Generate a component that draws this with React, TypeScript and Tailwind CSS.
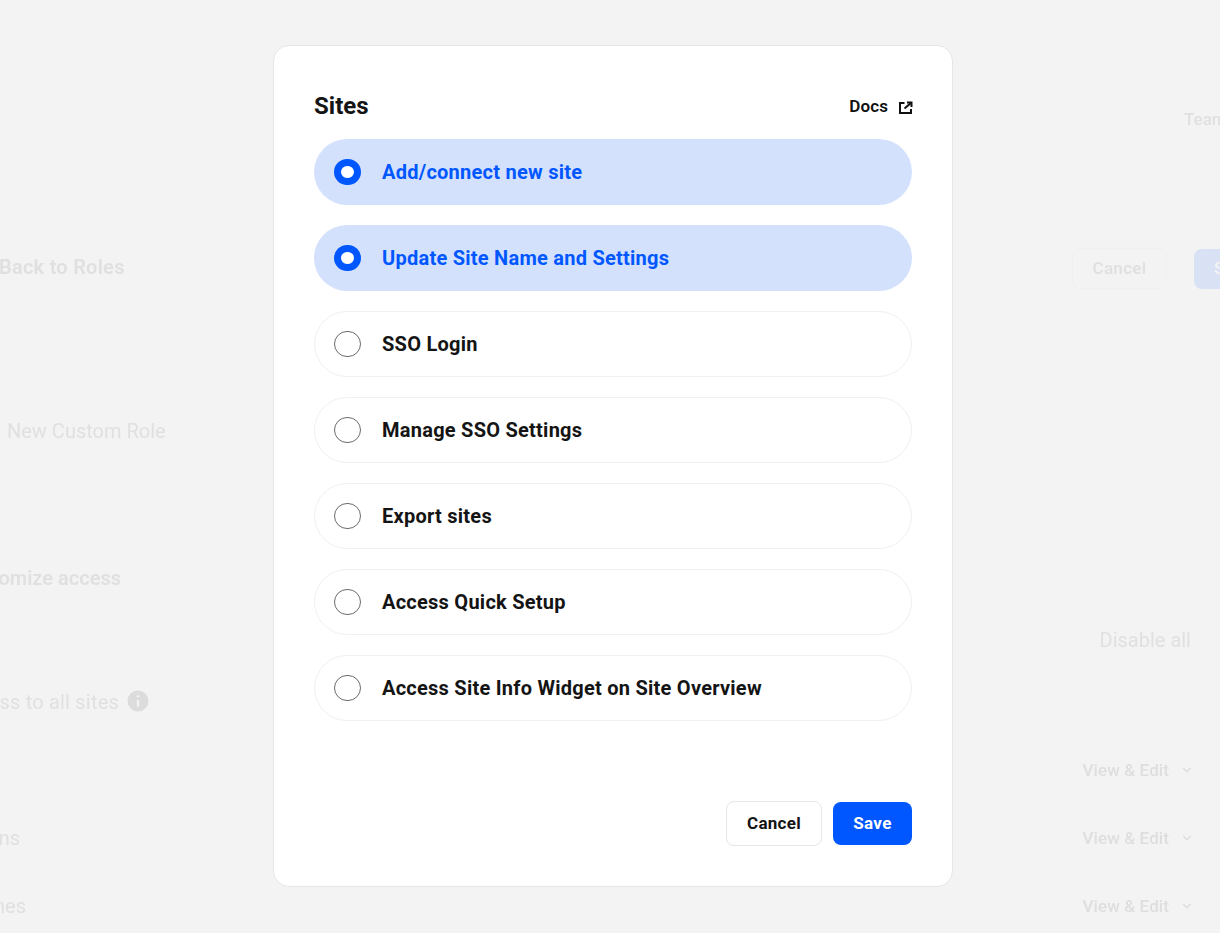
import React from 'react';
import { ChevronDown, Info } from 'lucide-react';

const options = [
  { label: 'Add/connect new site', checked: true },
  { label: 'Update Site Name and Settings', checked: true },
  { label: 'SSO Login', checked: false },
  { label: 'Manage SSO Settings', checked: false },
  { label: 'Export sites', checked: false },
  { label: 'Access Quick Setup', checked: false },
  { label: 'Access Site Info Widget on Site Overview', checked: false },
];

const ExternalLinkIcon = () => (
  <svg width="16" height="16" viewBox="0 0 16 16" fill="none" stroke="#111111" strokeWidth="2" className="mt-[2px] -mr-[2px] ml-[10px]">
    <path d="M6.5 3H2V13H13V9" />
    <path d="M6.5 8.5 13.5 2.5" />
    <path d="M9 2.5h4.5V7" />
  </svg>
);

const ViewEdit = () => (
  <div className="flex items-center text-[17px] font-medium tracking-[0.1px] text-[#dedede]">
    <span>View &amp; Edit</span>
    <ChevronDown className="ml-[11px] h-[14px] w-[14px]" strokeWidth={2.5} />
  </div>
);

// page behind the dialog, only faintly visible
const BackgroundPage = () => (
  <div className="flex flex-col blur-[0.6px] text-[#e0e0e0]">
    <div className="flex h-[238px] items-start justify-end pt-[107px]">
      <span className="w-[36px] overflow-hidden whitespace-nowrap text-[17px] font-medium">Team</span>
    </div>
    <div className="flex h-[58px] items-start justify-between pt-[14px]">
      <span className="-ml-[1px] text-[20px] font-semibold tracking-[0.25px] whitespace-nowrap">Back to Roles</span>
      <div className="-mt-[4px] flex items-center">
        <div className="flex h-[41px] w-[95px] items-center justify-center rounded-[8px] border border-[#f0f0f0] text-[17px] font-semibold tracking-[0.3px]">
          Cancel
        </div>
        <div className="ml-[27px] flex h-[40px] w-[26px] items-center overflow-hidden rounded-l-[8px] bg-[#d8e2f4] pl-[20px] text-[17px] font-semibold text-[#f3f3f3]">
          Save
        </div>
      </div>
    </div>
    <div className="flex h-[267px] items-start pt-[120px]">
      <span className="ml-[7px] text-[20px] whitespace-nowrap">New Custom Role</span>
    </div>
    <div className="flex h-[30px] items-center">
      <div className="flex w-[121px] justify-end overflow-hidden whitespace-nowrap text-[20px] font-semibold">Customize access</div>
    </div>
    <div className="flex h-[62px] items-end justify-end pr-[29px]">
      <span className="text-[20px] whitespace-nowrap">Disable all</span>
    </div>
    <div className="flex h-[62px] items-end">
      <div className="flex w-[119px] justify-end overflow-hidden text-[20px] tracking-[0.2px] whitespace-nowrap">Access to all sites</div>
      <Info className="mb-[2px] ml-[5px] h-[28px] w-[28px] fill-[#dcdcdc] stroke-[#f3f3f3]" />
    </div>
    <div className="flex h-[67px] items-end justify-end pr-[26px] pb-[1px]">
      <ViewEdit />
    </div>
    <div className="flex h-[68px] items-end justify-between pr-[26px] pb-[1px]">
      <div className="-mb-[2px] flex w-[20px] justify-end overflow-hidden whitespace-nowrap text-[20px]">Plugins</div>
      <ViewEdit />
    </div>
    <div className="flex h-[68px] items-end justify-between pr-[26px] pb-[1px]">
      <div className="-mb-[2px] flex w-[26px] justify-end overflow-hidden whitespace-nowrap text-[20px]">Zones</div>
      <ViewEdit />
    </div>
  </div>
);

const Radio = ({ checked }: { checked: boolean }) =>
  checked ? (
    <span className="h-[26px] w-[27px] shrink-0 rounded-full border-[7px] border-[#0057ff] bg-white" />
  ) : (
    <span className="h-[26px] w-[27px] shrink-0 rounded-full border border-[#6b6b6b] bg-white" />
  );

export default function App() {
  return (
    <div className="relative h-[933px] w-full overflow-hidden bg-[#f3f3f3] font-['Roboto',sans-serif]">
      <BackgroundPage />

      {/* Dialog */}
      <div className="absolute inset-0 flex items-start justify-center pt-[45px] pl-[6px]">
        <div className="flex h-[842px] w-[680px] flex-col rounded-[16px] border border-[#e6e6e6] bg-white px-[40px] pt-[40px]">
          <div className="flex h-[53px] items-start justify-between">
            <h2 className="text-[24px] leading-[40px] font-bold text-[#141414]">Sites</h2>
            <a className="flex h-[42px] items-center text-[17px] font-semibold tracking-[0.1px] text-[#111111]">
              Docs
              <ExternalLinkIcon />
            </a>
          </div>

          <div className="flex flex-col gap-[20px]">
            {options.map((o) => (
              <div
                key={o.label}
                className={
                  o.checked
                    ? 'flex h-[66px] items-center gap-[21px] rounded-full bg-[#d4e1fd] pl-[20px] text-[20px] font-bold tracking-[0.25px] text-[#0057ff]'
                    : 'flex h-[66px] items-center gap-[21px] rounded-full border border-[#f0f0f0] pl-[19px] text-[20px] font-bold tracking-[0.25px] text-[#141414]'
                }
              >
                <Radio checked={o.checked} />
                <span>{o.label}</span>
              </div>
            ))}
          </div>

          <div className="mt-[80px] flex items-center justify-end gap-[11px]">
            <button className="h-[45px] w-[96px] rounded-[8px] border border-[#e6e6e6] bg-white text-[17px] font-bold tracking-[0.3px] text-[#141414]">
              Cancel
            </button>
            <button className="h-[43px] w-[79px] rounded-[8px] bg-[#0057ff] text-[17px] font-bold tracking-[0.3px] text-white">
              Save
            </button>
          </div>
        </div>
      </div>
    </div>
  );
}
